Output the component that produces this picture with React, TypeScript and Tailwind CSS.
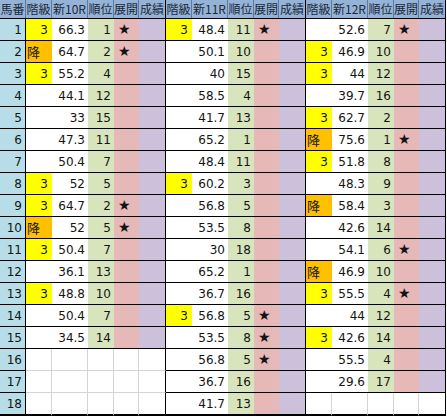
import React from 'react'

const g1 = ['3|66.3|1|*', '降|64.7|2|*', '3|55.2|4|', '|44.1|12|', '|33|15|', '|47.3|11|', '|50.4|7|', '3|52|5|', '3|64.7|2|*', '降|52|5|*', '3|50.4|7|', '|36.1|13|', '3|48.8|10|', '|50.4|7|', '|34.5|14|', '', '', '']
const g2 = ['3|48.4|11|*', '|50.1|10|', '|40|15|', '|58.5|4|', '|41.7|13|', '|65.2|1|', '|48.4|11|', '3|60.2|3|', '|56.8|5|', '|53.5|8|', '|30|18|', '|65.2|1|', '|36.7|16|', '3|56.8|5|*', '|53.5|8|*', '|56.8|5|*', '|36.7|16|', '|41.7|13|']
const g3 = ['|52.6|7|*', '3|46.9|10|', '3|44|12|', '|39.7|16|', '3|62.7|2|', '降|75.6|1|*', '3|51.8|8|', '|48.3|9|', '降|58.4|3|', '|42.6|14|', '|54.1|6|*', '降|46.9|10|', '3|55.5|4|*', '|44|12|', '3|42.6|14|', '|55.5|4|', '|29.6|17|', '']
const groups = [
  { race: '新10R', rows: g1 },
  { race: '新11R', rows: g2 },
  { race: '新12R', rows: g3 },
]

function HeadCell({ w, label, last }: { w: string; label: string; last?: boolean }) {
  return (
    <div
      className={`${w} flex h-full shrink-0 items-center justify-center overflow-hidden whitespace-nowrap border-r ${
        last ? 'border-black' : 'border-[#5b7aa3]'
      }`}
    >
      {label}
    </div>
  )
}

function GroupCells({ entry, lastRow }: { entry: string; lastRow: boolean }) {
  const bottom = lastRow ? 'border-b-2 border-b-black' : entry ? 'border-b border-b-black' : 'border-b border-b-[#d4d4d4]'
  if (!entry) {
    return (
      <>
        <div className={`w-[26px] shrink-0 border-r border-r-[#d4d4d4] bg-white ${bottom}`} />
        <div className={`w-[36px] shrink-0 border-r border-r-[#d4d4d4] bg-white ${bottom}`} />
        <div className={`w-[26px] shrink-0 border-r border-r-[#d4d4d4] bg-white ${bottom}`} />
        <div className={`w-[25px] shrink-0 border-r border-r-[#d4d4d4] bg-white ${bottom}`} />
        <div className={`w-[27px] shrink-0 border-r border-r-black bg-white ${bottom}`} />
      </>
    )
  }
  const [cls, val, rank, star] = entry.split('|')
  const clsBg =
    cls === '3'
      ? 'bg-[#ffff00] justify-end pr-[4px]'
      : cls === '降'
        ? "bg-[#ffc000] justify-start pl-[1px] text-[13px] font-['Noto_Sans_CJK_JP',sans-serif]"
        : 'bg-white'
  return (
    <>
      <div className={`flex w-[26px] shrink-0 items-center ${clsBg} ${bottom}`}>{cls}</div>
      <div className={`flex w-[36px] shrink-0 items-center justify-end bg-white pr-[3px] ${bottom}`}>{val}</div>
      <div className={`flex w-[26px] shrink-0 items-center justify-end bg-[#d8e4bc] pr-[3px] ${bottom}`}>{rank}</div>
      <div className={`flex w-[25px] shrink-0 items-center bg-[#e6b8b7] pl-[4px] text-[14px] ${bottom}`}>{star ? '★' : ''}</div>
      <div className={`w-[27px] shrink-0 border-r border-r-black bg-[#ccc0da] ${bottom}`} />
    </>
  )
}

export default function App() {
  return (
    <div className="h-[419px] w-[447px] overflow-hidden bg-white text-[12px] text-[#141414] font-['DejaVu_Sans','Noto_Sans_CJK_JP',sans-serif]">
      <div className="flex h-[19px] w-[446px] border-b border-b-black bg-[#95b3d7] text-[12px] text-[#1c2838] font-['Noto_Sans_CJK_JP',sans-serif]">
        <HeadCell w="w-[26px]" label="馬番" />
        {groups.map((g) => (
          <React.Fragment key={g.race}>
            <HeadCell w="w-[26px]" label="階級" />
            <HeadCell w="w-[36px]" label={g.race} />
            <HeadCell w="w-[26px]" label="順位" />
            <HeadCell w="w-[25px]" label="展開" />
            <HeadCell w="w-[27px]" label="成績" last />
          </React.Fragment>
        ))}
      </div>
      {Array.from({ length: 18 }, (_, i) => {
        const lastRow = i === 17
        return (
          <div key={i} className={`flex w-[446px] ${lastRow ? 'h-[23px]' : 'h-[22px]'}`}>
            <div
              className={`flex w-[26px] shrink-0 items-center justify-end border-r border-r-black bg-[#b7dee8] pr-[3px] ${
                lastRow ? 'border-b-2 border-b-black' : 'border-b border-b-black'
              }`}
            >
              {i + 1}
            </div>
            {groups.map((g) => (
              <GroupCells key={g.race} entry={g.rows[i]} lastRow={lastRow} />
            ))}
          </div>
        )
      })}
    </div>
  )
}
